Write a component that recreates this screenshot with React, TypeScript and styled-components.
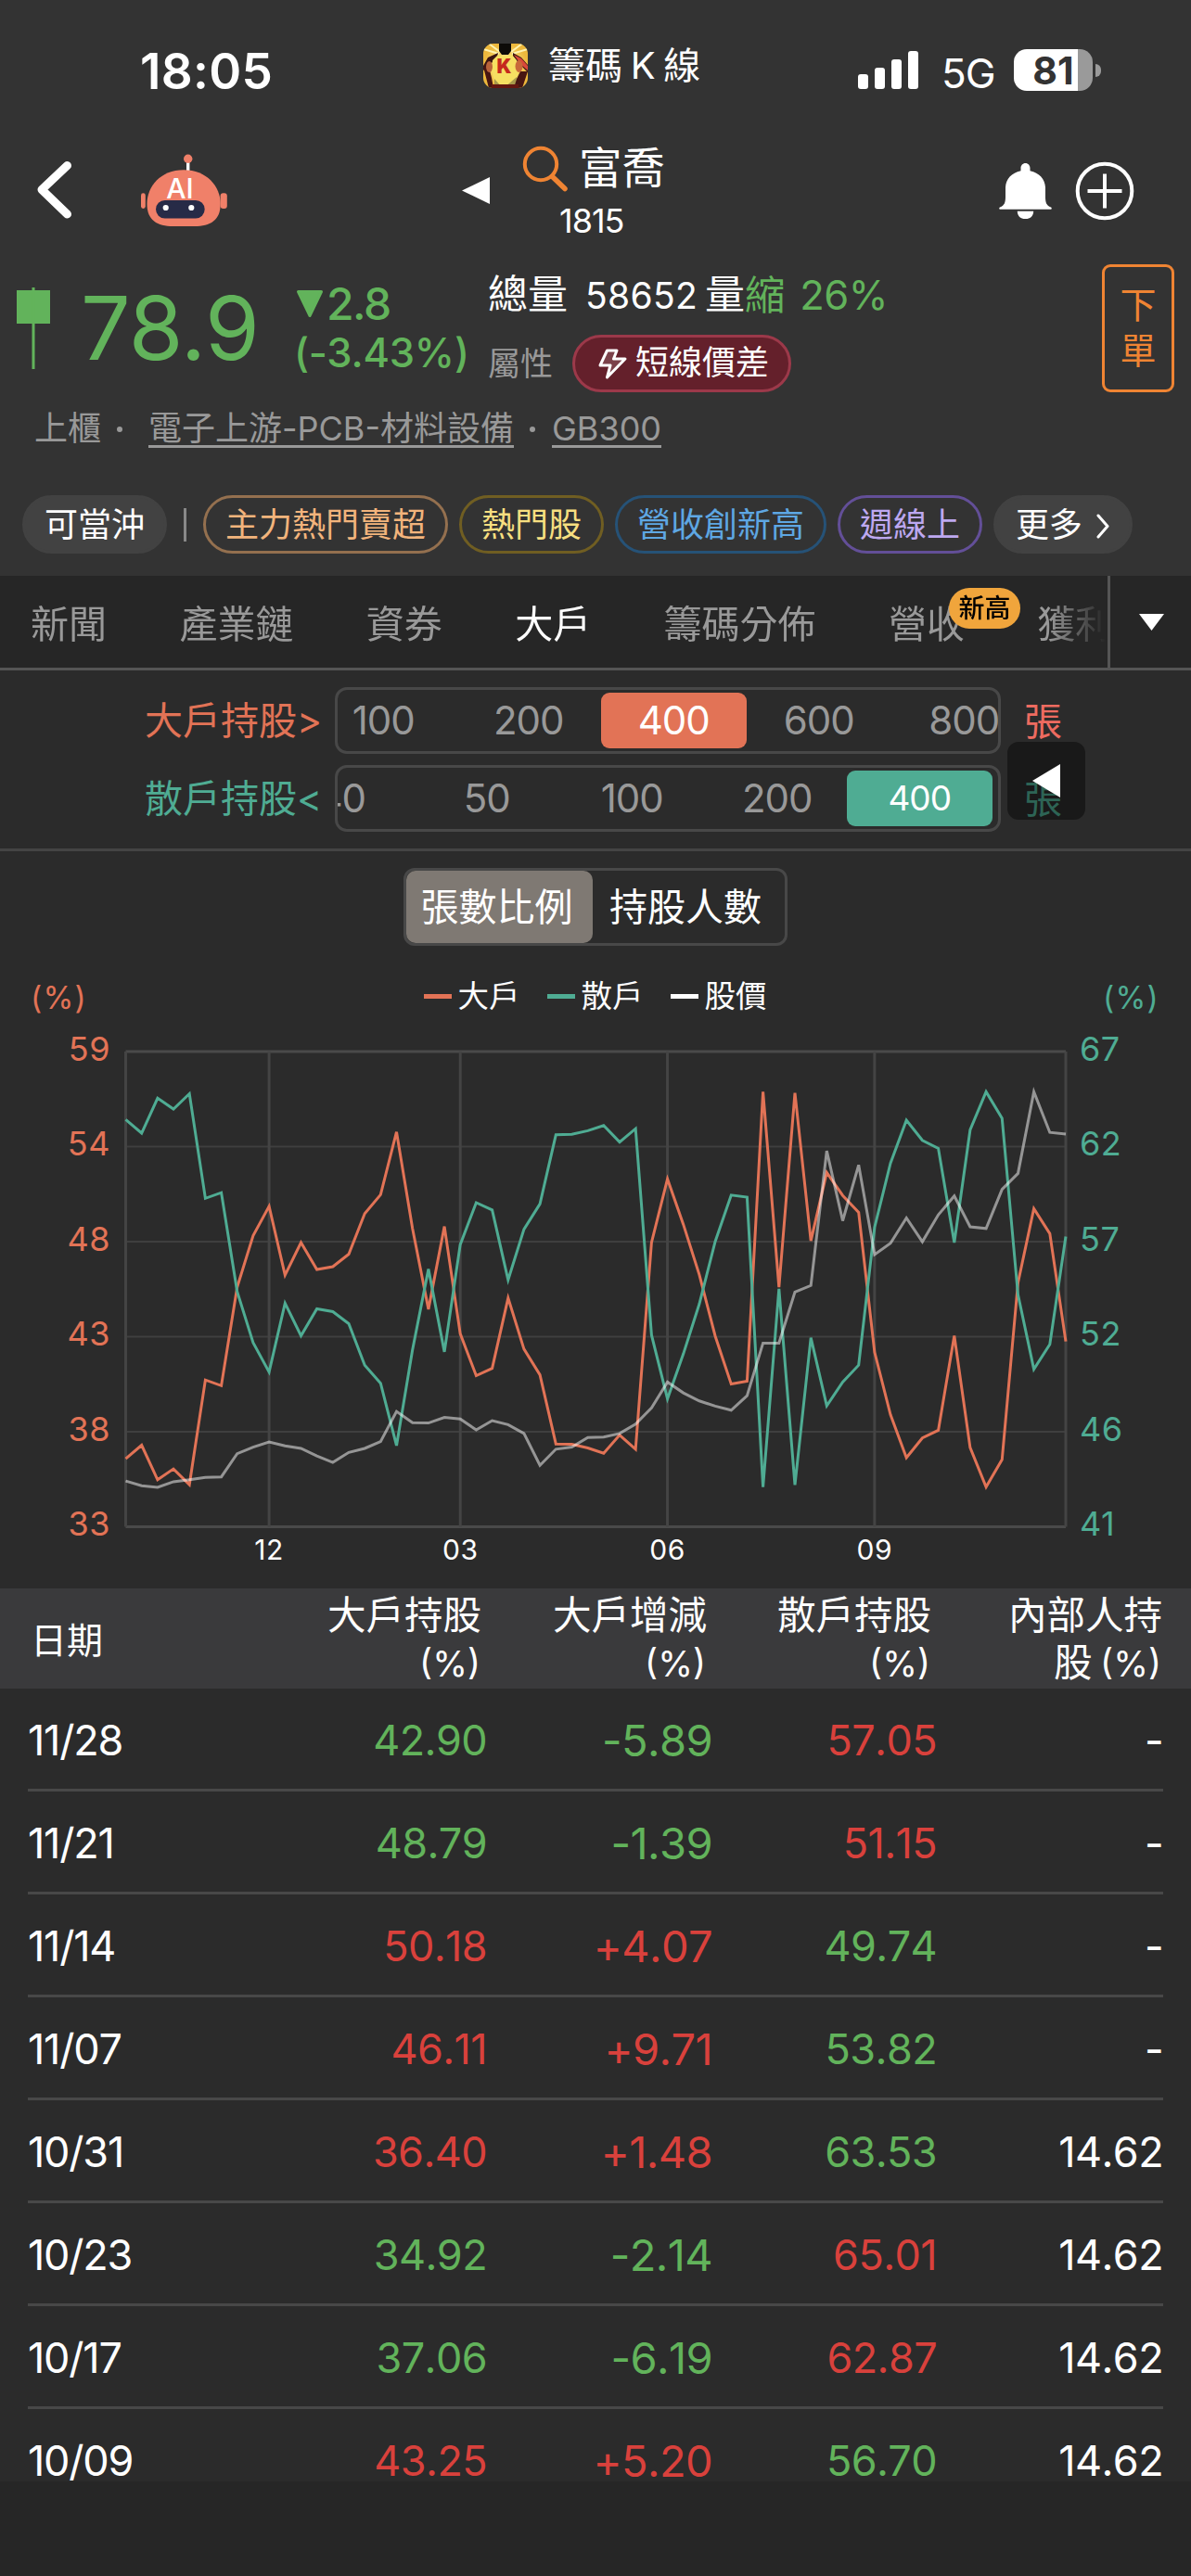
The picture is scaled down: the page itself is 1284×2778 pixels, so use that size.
import React from "react";
import styled, { createGlobalStyle } from "styled-components";

const c = {
  header: "#333333",
  body: "#2b2b2b",
  dark: "#262626",
  line: "#484848",
  grey: "#999999",
  green: "#62b35b",
  red: "#d9413c",
  coral: "#e27356",
  teal: "#4fac93",
  orange: "#ef8433",
};

const GlobalStyle = createGlobalStyle`
  *, *::before, *::after { box-sizing: border-box; }
  body {
    margin: 0;
    background: ${c.body};
    color: #fff;
    font-family: Inter, "Noto Sans CJK TC", sans-serif;
    font-size: 41px;
    line-height: 1.2;
  }
  svg { display: block; flex: none; }
`;

const Screen = styled.div`
  width: 1284px;
  height: 2778px;
  overflow: hidden;
  display: flex;
  flex-direction: column;
  white-space: nowrap;
`;

const Header = styled.header`
  height: 621px;
  flex: none;
  background: ${c.header};
`;

/* ---------- status bar ---------- */

const StatusBar = styled.div`
  height: 130px;
  display: flex;
  align-items: flex-start;
  line-height: 50px;
`;

const Clock = styled.div`
  width: 521px;
  padding-left: 151px;
  margin-top: 52px;
  font-size: 53px;
  font-weight: 600;
  letter-spacing: 0.3px;
`;

const AppTitle = styled.div`
  width: 404px;
  display: flex;
  align-items: center;
  margin-top: 46px;
  font-size: 40px;
`;

const AppName = styled.span`
  margin-left: 22px;
  word-spacing: -2.5px;
`;

const Network = styled.div`
  width: 78px;
  margin-top: 54px;
  font-size: 44px;
  letter-spacing: -1px;
`;

const Signal = styled.div`
  display: flex;
  align-items: flex-end;
  gap: 7px;
  height: 41px;
  width: 90px;
  margin-top: 55px;
`;

const SignalBar = styled.i<{ $h: number }>`
  width: 11px;
  height: ${(p) => p.$h}px;
  border-radius: 3px;
  background: #fff;
`;

const Battery = styled.div`
  width: 85px;
  height: 45px;
  margin-top: 53px;
  border-radius: 14px;
  background: linear-gradient(90deg, #fff 81%, #9a9a9a 81%);
  color: ${c.header};
  font-size: 41px;
  font-weight: 700;
  line-height: 46px;
  text-align: center;
`;

const BatteryTip = styled.i`
  width: 6px;
  height: 14px;
  margin: 69px 0 0 3px;
  border-radius: 0 7px 7px 0;
  background: #9a9a9a;
`;

/* ---------- navigation ---------- */

const NavBar = styled.nav`
  height: 149px;
  display: flex;
  align-items: center;
  padding-left: 38px;
`;

const NavLeft = styled.div`
  display: flex;
  align-items: center;
  gap: 73px;
  width: 460px;
`;

const StockSwitch = styled.div`
  display: flex;
  align-items: center;
  width: 579px;
  padding-top: 1px;
`;

const StockTitle = styled.div`
  margin-left: 35px;
  display: flex;
  flex-direction: column;
`;

const StockName = styled.div`
  display: flex;
  align-items: center;
  gap: 11px;
  height: 64px;
  margin-top: -2px;
  font-size: 46.5px;
`;

const StockCode = styled.div`
  height: 45px;
  padding-left: 40px;
  font-size: 36px;
  line-height: 48px;
  letter-spacing: -1px;
`;

const NavActions = styled.div`
  display: flex;
  align-items: center;
  gap: 25px;
  padding-top: 3px;
`;

/* ---------- quote ---------- */

const Quote = styled.section`
  height: 138px;
  margin-top: 6px;
  padding-left: 18px;
  display: flex;
  align-items: center;
`;

const Price = styled.div`
  width: 232px;
  margin-left: 33px;
  color: ${c.green};
  font-size: 95px;
  letter-spacing: -0.6px;
`;

const Change = styled.div`
  width: 207px;
  color: ${c.green};
  font-weight: 500;
  line-height: 53px;
`;

const ChangeAmount = styled.div`
  display: flex;
  align-items: center;
  gap: 3px;
  font-size: 48px;
  letter-spacing: -1.5px;
`;

const ChangeRate = styled.div`
  margin-left: -2px;
  font-size: 43.5px;
  letter-spacing: -0.2px;
`;

const Stats = styled.div`
  width: 662px;
  display: flex;
  flex-direction: column;
  padding-top: 2px;
`;

const StatRow = styled.div`
  height: 74px;
  display: flex;
  align-items: center;
`;

const StatLabel = styled.span`
  font-size: 43px;
`;

const Volume = styled.span`
  margin: 2px 8px 0 19px;
  font-size: 39px;
  letter-spacing: 0.3px;
`;

const Shrink = styled.span`
  display: flex;
  gap: 16px;
  color: ${c.green};
  font-size: 43.5px;
  letter-spacing: -0.4px;
`;

const TraitLabel = styled.span`
  color: ${c.grey};
  font-size: 35px;
`;

const Trait = styled.span`
  width: 236px;
  height: 62px;
  margin-left: 21px;
  padding-left: 25px;
  display: flex;
  align-items: center;
  gap: 9px;
  border: 3px solid #9c394a;
  border-radius: 31px;
  background: #64202b;
  font-size: 36px;
`;

const OrderButton = styled.button`
  width: 78px;
  height: 138px;
  padding: 0 0 2px;
  border: 3px solid ${c.orange};
  border-radius: 9px;
  background: none;
  color: ${c.orange};
  font: inherit;
  font-size: 39px;
  line-height: 49px;
`;

const Industry = styled.div`
  height: 79px;
  padding-left: 37px;
  display: flex;
  align-items: center;
  color: ${c.grey};
  font-size: 36px;
`;

const Dot = styled.i<{ $gap: number }>`
  width: 6px;
  height: 6px;
  margin: 0 ${(p) => p.$gap}px 0 17px;
  border-radius: 50%;
  background: ${c.grey};
`;

const IndustryLink = styled.a`
  height: 41px;
  border-bottom: 3px solid ${c.grey};
  line-height: 41px;
`;

const Chips = styled.div`
  margin-top: 32px;
  padding-left: 24px;
  display: flex;
  align-items: center;
  gap: 12px;
`;

const Chip = styled.span<{ $color?: string; $edge?: string }>`
  height: 63px;
  padding: 2px 21px 0;
  display: flex;
  align-items: center;
  gap: 15px;
  border: 3px solid ${(p) => p.$edge ?? "#424242"};
  border-radius: 32px;
  background: ${(p) => (p.$edge ? "none" : "#424242")};
  color: ${(p) => p.$color ?? "#fff"};
  font-size: 36px;
`;

const ChipDivider = styled.i`
  width: 3px;
  height: 36px;
  margin: 0 6px;
  background: #888;
`;

/* ---------- tabs ---------- */

const TabBar = styled.div`
  height: 102px;
  flex: none;
  display: flex;
  background: ${c.dark};
  border-bottom: 3px solid #555;
`;

const TabList = styled.div`
  width: 1194px;
  padding-left: 33px;
  display: flex;
  align-items: center;
  gap: 78.4px;
  overflow: hidden;
  mask-image: linear-gradient(90deg, #000 1130px, transparent 1192px);
`;

const Tab = styled.div<{ $active?: boolean }>`
  position: relative;
  padding-top: 6px;
  color: ${(p) => (p.$active ? "#fff" : c.grey)};
`;

const TabBadge = styled.span`
  position: absolute;
  left: 65px;
  top: -9px;
  width: 77px;
  height: 44px;
  border-radius: 22px;
  background: #f0a53c;
  color: #000;
  font-size: 28px;
  font-weight: 500;
  line-height: 44px;
  text-align: center;
`;

const TabMenu = styled.div`
  flex: 1;
  display: flex;
  align-items: center;
  justify-content: center;
  padding-left: 1px;
  border-left: 3px solid #555;
`;

/* ---------- holding filters ---------- */

const Filters = styled.section`
  position: relative;
  height: 195px;
  flex: none;
  padding: 18px 0 0 156px;
  display: flex;
  flex-direction: column;
  gap: 12px;
  border-bottom: 3px solid #444;
`;

const FilterRow = styled.div<{ $color: string }>`
  height: 72px;
  display: flex;
  align-items: center;
  color: ${(p) => p.$color};
`;

const FilterLabel = styled.span`
  width: 205px;
  padding-top: 2px;
`;

const Slider = styled.div`
  width: 718px;
  height: 72px;
  display: flex;
  align-items: center;
  overflow: hidden;
  border: 3px solid ${c.line};
  border-radius: 13px;
`;

const Track = styled.div<{ $shift: number }>`
  display: flex;
  margin-left: ${(p) => p.$shift}px;
`;

const Option = styled.span<{ $fill?: string; $size?: number; $snap?: number }>`
  width: 156.5px;
  height: 60px;
  flex: none;
  margin-left: ${(p) => p.$snap ?? 0}px;
  border-radius: 9px;
  background: ${(p) => p.$fill ?? "none"};
  color: ${(p) => (p.$fill ? "#fff" : c.grey)};
  font-size: ${(p) => p.$size ?? 42}px;
  line-height: 60px;
  text-align: center;
  letter-spacing: -1px;
`;

const Unit = styled.span<{ $color?: string }>`
  margin-left: 25px;
  padding-top: 3px;
  color: ${(p) => p.$color ?? "inherit"};
`;

const SideHandle = styled.div`
  position: absolute;
  left: 1086px;
  top: 77px;
  width: 84px;
  height: 84px;
  display: flex;
  align-items: center;
  justify-content: center;
  border-radius: 12px;
  background: rgba(0, 0, 0, 0.42);
`;

/* ---------- chart ---------- */

const Segmented = styled.div`
  width: 414px;
  height: 84px;
  flex: none;
  margin: 18px 0 0 435px;
  display: flex;
  border: 3px solid ${c.line};
  border-radius: 12px;
`;

const Segment = styled.div<{ $active?: boolean }>`
  width: ${(p) => (p.$active ? 201 : 207)}px;
  padding-right: ${(p) => (p.$active ? 6 : 7)}px;
  border-radius: 10px;
  background: ${(p) => (p.$active ? "#7f7973" : "none")};
  line-height: 79px;
  text-align: center;
`;

const LegendRow = styled.div`
  height: 108px;
  flex: none;
  padding: 0 34px 0 33px;
  display: flex;
  align-items: center;
  justify-content: space-between;
  font-size: 33.5px;
`;

const Percent = styled.span<{ $color: string }>`
  padding-top: 5px;
  color: ${(p) => p.$color};
  letter-spacing: 1.2px;
`;

const Legend = styled.div`
  display: flex;
  gap: 29px;
`;

const LegendItem = styled.span<{ $color: string }>`
  display: flex;
  align-items: center;
  gap: 7px;
  padding-top: 1px;
  &::before {
    content: "";
    width: 30px;
    height: 5px;
    background: ${(p) => p.$color};
  }
`;

const Plot = styled.svg`
  margin-top: -30px;
`;

const AxisText = styled.text<{ $size: number }>`
  font-size: ${(p) => p.$size}px;
  letter-spacing: 0.5px;
`;

/* ---------- table ---------- */

const columns = `
  display: grid;
  grid-template-columns: 1fr 244px 244px 244px 244px;
  align-items: center;
`;

const TableHead = styled.div`
  ${columns}
  height: 108px;
  flex: none;
  padding: 2px 30px 0;
  background: #3a3a3c;
  font-size: 41.5px;
  line-height: 51px;
  text-align: right;
`;

const HeadDate = styled.div`
  padding-left: 3px;
  font-size: 39px;
  text-align: left;
`;

const HeadCell = styled.div<{ $inset: number }>`
  padding-right: ${(p) => p.$inset}px;
  word-spacing: -3px;
`;

const HeadPercent = styled.span`
  padding-right: 1px;
  font-size: 38.5px;
`;

const TableBody = styled.div`
  height: 855px;
  flex: none;
  overflow: hidden;
`;

const TableRow = styled.div`
  ${columns}
  height: 111px;
  margin: 0 30px;
  padding-top: 4px;
  border-bottom: 3px solid ${c.line};
  font-size: 45px;
  font-kerning: none;
`;

const DateCell = styled.div`
  letter-spacing: -1.2px;
`;

const ValueCell = styled.div<{ $color?: string; $size?: number; $outset?: number }>`
  margin-right: ${(p) => -(p.$outset ?? 0)}px;
  color: ${(p) => p.$color ?? "#fff"};
  font-size: ${(p) => p.$size ?? 45}px;
  letter-spacing: -0.6px;
  text-align: right;
`;

const HomeArea = styled.div`
  flex: 1;
  background: ${c.dark};
`;

/* ---------- icons ---------- */

const AppIcon = () => (
  <svg width="48" height="48" viewBox="0 0 48 48">
    <defs>
      <clipPath id="app-icon">
        <rect width="48" height="48" rx="11" />
      </clipPath>
      <radialGradient id="app-glow">
        <stop offset="0" stopColor="#fff6a0" />
        <stop offset="1" stopColor="#edb83c" />
      </radialGradient>
    </defs>
    <g clipPath="url(#app-icon)">
      <rect width="48" height="48" fill="url(#app-glow)" />
      <path d="M0 6 17 11M6 0 18 9M48 6 31 11M42 0 30 9" stroke="#fff3b0" strokeWidth="2" />
      <path d="M17 0h13v8l-3 4h-7l-3-4z" fill="#0d0b08" />
      <path d="M16 10 5 15 0 24v5l7-6 8-8zM32 10l9 5 7 8v8l-8-8-8-9z" fill="#3a1512" />
      <path d="M33 12l8 4 7 8v5l-8-7z" fill="#d9483a" />
      <path d="M16 12 10 18 9 30 14 48h20l5-20-3-10-5-6-7 2z" fill="#f6df62" />
      <path d="M12 38 21 48h-9zM36 36 22 48h13z" fill="#a89a4c" />
      <path d="M0 25h6l3 12 2 11H6zM48 30h-8l-4 8-3 10h9z" fill="#471612" />
      <ellipse cx="6.500" cy="25" rx="3.500" ry="6" fill="#b8633a" />
      <ellipse cx="38.500" cy="24.500" rx="4" ry="6.500" fill="#c8683a" />
      <path d="M9 44h29v4H9z" fill="#641711" />
      <text x="22.500" y="31.500" fill="#c5281e" fontSize="21" fontWeight="900" textAnchor="middle">K</text>
    </g>
  </svg>
);

const Robot = () => (
  <svg width="94" height="80" viewBox="0 0 94 80">
    <rect x="49" y="9" width="3.400" height="11" fill="#fff" />
    <circle cx="50.700" cy="6.300" r="4.700" fill="#f08069" />
    <rect x="0" y="43.300" width="4.800" height="16.700" rx="2.400" fill="#f08069" />
    <rect x="85.600" y="43.300" width="7.200" height="16.700" rx="3" fill="#f08069" />
    <path d="M46 18.300c25 0 39.700 18 39.700 36.500 0 18-11 24.200-28 24.200H34.500c-17 0-28-6.200-28-24.200C6.500 36.300 21 18.300 46 18.300z" fill="#f08069" />
    <rect x="16" y="51" width="52.700" height="19.500" rx="9.700" fill="#272b47" />
    <circle cx="26.700" cy="59" r="3.100" fill="#fff" />
    <circle cx="54.300" cy="59" r="3.100" fill="#fff" />
    <text x="42" y="49.300" fill="#fff" fontSize="30" fontWeight="500" textAnchor="middle">AI</text>
  </svg>
);

const BackIcon = () => (
  <svg width="41" height="66" viewBox="0 0 41 66" fill="none" stroke="#fff" strokeWidth="9" strokeLinecap="round" strokeLinejoin="round">
    <path d="M34.500 6.500 7 32.500l27.500 26.500" />
  </svg>
);

const SearchIcon = () => (
  <svg width="50" height="50" viewBox="0 0 50 50" fill="none" stroke={c.orange} strokeLinecap="round">
    <circle cx="20" cy="20" r="17.200" strokeWidth="4" />
    <path d="M32.500 33.500 46 46.500" strokeWidth="5.500" />
  </svg>
);

const LeftArrow = ({ w, h }: { w: number; h: number }) => (
  <svg width={w} height={h} viewBox="0 0 10 10" preserveAspectRatio="none">
    <path d="M10 0v10L0 5z" fill="#fff" />
  </svg>
);

const BellIcon = () => (
  <svg width="57" height="60" viewBox="0 0 57 60" fill="#fff">
    <path d="M28.500 0c3 0 5 2.400 5 5.500v2.800C43.500 10.500 49.500 17 50 26v11c.2 5 .8 8.500 6 10.500 1.200.8 1 2.300-.6 2.300H1.600C0 49.800-.2 48.300 1 47.500c5.200-2 5.800-5.500 6-10.500V26C7.500 17 13.500 10.500 23.500 8.300V5.500c0-3.100 2-5.500 5-5.500z" />
    <path d="M19.800 51.800h17.400c0 5-3.500 8.400-8.700 8.400s-8.700-3.400-8.700-8.400z" />
  </svg>
);

const PlusCircle = () => (
  <svg width="64" height="64" viewBox="0 0 64 64" fill="none" stroke="#fff" strokeWidth="4">
    <circle cx="32" cy="32" r="29.300" />
    <path d="M32 13.500v37M13.500 32h37" />
  </svg>
);

const Candle = () => (
  <svg width="36" height="88" viewBox="0 0 36 88" fill={c.green}>
    <rect y="3" width="36" height="36" />
    <rect x="16.500" width="3" height="88" />
  </svg>
);

const DownTriangle = () => (
  <svg width="30" height="31" viewBox="0 0 30 31">
    <path d="M2.500 2.500h25L15 28.500z" fill={c.green} stroke={c.green} strokeWidth="3" strokeLinejoin="round" />
  </svg>
);

const Bolt = () => (
  <svg width="31" height="33" viewBox="0 0 31 33" fill="rgba(255,255,255,.15)" stroke="#fff" strokeWidth="3" strokeLinejoin="round">
    <path d="M9.500 2h10.500l-3.500 9h12.500L9.500 31l3.500-13H2z" />
  </svg>
);

const ChevronRight = () => (
  <svg width="15" height="30" viewBox="0 0 15 30" fill="none" stroke="#fff" strokeWidth="3" strokeLinecap="round" strokeLinejoin="round">
    <path d="M2 4l10 11.500L2 27" />
  </svg>
);

const MenuArrow = () => (
  <svg width="27" height="18" viewBox="0 0 27 18">
    <path d="M0 0h27L13.500 18z" fill="#fff" />
  </svg>
);

/* ---------- chart data: weekly samples, 0 = top edge of the plot, 1182 = bottom ---------- */

const RANGE = 1182;

const major = [
  1013, 979, 1065, 1038, 1077, 817, 831, 586, 458, 385, 556, 475, 542, 535, 504, 403, 356, 200, 440, 641,
  435, 702, 806, 788, 613, 740, 804, 976, 977, 986, 999, 954, 989, 475, 317, 430, 555, 708, 827, 820,
  100, 586, 103, 471, 301, 358, 400, 748, 903, 1010, 961, 942, 707, 985, 1083, 1015, 575, 391, 453, 721,
];
const retail = [
  169, 203, 116, 143, 105, 365, 351, 597, 724, 797, 626, 707, 640, 647, 677, 780, 825, 980, 742, 541,
  747, 480, 376, 394, 568, 442, 379, 207, 206, 197, 184, 225, 192, 705, 864, 752, 628, 472, 357, 362,
  1083, 590, 1078, 712, 881, 822, 780, 437, 278, 171, 221, 241, 475, 195, 100, 166, 605, 790, 728, 460,
];
const stockPrice = [
  1068, 1080, 1084, 1070, 1065, 1059, 1058, 1000, 984, 971, 981, 987, 1006, 1022, 997, 987, 970, 895, 923, 924,
  910, 914, 941, 918, 928, 950, 1029, 989, 984, 960, 959, 950, 927, 886, 822, 849, 869, 882, 892, 856,
  725, 725, 598, 582, 247, 421, 282, 505, 477, 414, 473, 406, 359, 436, 440, 343, 303, 100, 201, 205,
];

const LEFT = 135.5;
const RIGHT = 1149;
const TOP = 36;
const BOTTOM = 548.5;

const px = (i: number) => LEFT + ((RIGHT - LEFT) * i) / 59;
const py = (v: number) => TOP + ((BOTTOM - TOP) * v) / RANGE;
const points = (s: number[]) => s.map((v, i) => `${px(i).toFixed(1)},${py(v).toFixed(1)}`).join(" ");

const leftTicks = [59, 54, 48, 43, 38, 33];
const rightTicks = [67, 62, 57, 52, 46, 41];
const months: [number, string][] = [[9, "12"], [21, "03"], [34, "06"], [47, "09"]];

const Chart = () => (
  <Plot width="1284" height="615" viewBox="0 0 1284 615" fill="none">
    {leftTicks.map((t, i) => {
      const y = py((RANGE * i) / 5);
      const edge = i === 0 || i === 5;
      return (
        <g key={t}>
          <line x1={LEFT} x2={RIGHT} y1={y} y2={y} stroke={edge ? "#4a4a4a" : "#3f3f3f"} strokeWidth={edge ? 3 : 2} />
          <AxisText $size={36} x="119" y={y + 9.5} fill={c.coral} textAnchor="end">{t}</AxisText>
          <AxisText $size={36} x="1164" y={y + 9.5} fill={c.teal}>{rightTicks[i]}</AxisText>
        </g>
      );
    })}
    {[LEFT, RIGHT].map((x) => (
      <line key={x} x1={x} x2={x} y1={TOP} y2={BOTTOM} stroke="#444" strokeWidth="3" />
    ))}
    {months.map(([i, m]) => (
      <g key={m}>
        <line x1={px(i)} x2={px(i)} y1={TOP} y2={BOTTOM} stroke="#444" strokeWidth="3" />
        <AxisText $size={30} x={px(i)} y="584" fill="#fff" textAnchor="middle">{m}</AxisText>
      </g>
    ))}
    <polyline points={points(major)} stroke={c.coral} strokeWidth="3" />
    <polyline points={points(retail)} stroke={c.teal} strokeWidth="3" />
    <polyline points={points(stockPrice)} stroke="#fff" strokeOpacity="0.5" strokeWidth="3" />
  </Plot>
);

/* ---------- table data ---------- */

type Row = [date: string, major: string, diff: string, retail: string, insider: string];

const rows: Row[] = [
  ["11/28", "42.90", "-5.89", "57.05", "-"],
  ["11/21", "48.79", "-1.39", "51.15", "-"],
  ["11/14", "50.18", "+4.07", "49.74", "-"],
  ["11/07", "46.11", "+9.71", "53.82", "-"],
  ["10/31", "36.40", "+1.48", "63.53", "14.62"],
  ["10/23", "34.92", "-2.14", "65.01", "14.62"],
  ["10/17", "37.06", "-6.19", "62.87", "14.62"],
  ["10/09", "43.25", "+5.20", "56.70", "14.62"],
];

const headings: [string, number][] = [["大戶持股", 3], ["大戶增減", 4], ["散戶持股", 6]];

export default function App() {
  return (
    <Screen>
      <GlobalStyle />
      <Header>
        <StatusBar>
          <Clock>18:05</Clock>
          <AppTitle>
            <AppIcon />
            <AppName>籌碼 K 線</AppName>
          </AppTitle>
          <Signal>
            {[16, 23, 32, 41].map((h) => (
              <SignalBar key={h} $h={h} />
            ))}
          </Signal>
          <Network>5G</Network>
          <Battery>81</Battery>
          <BatteryTip />
        </StatusBar>

        <NavBar>
          <NavLeft>
            <BackIcon />
            <Robot />
          </NavLeft>
          <StockSwitch>
            <LeftArrow w={30} h={29} />
            <StockTitle>
              <StockName>
                <SearchIcon />
                富喬
              </StockName>
              <StockCode>1815</StockCode>
            </StockTitle>
          </StockSwitch>
          <NavActions>
            <BellIcon />
            <PlusCircle />
          </NavActions>
        </NavBar>

        <Quote>
          <Candle />
          <Price>78.9</Price>
          <Change>
            <ChangeAmount>
              <DownTriangle />
              2.8
            </ChangeAmount>
            <ChangeRate>(-3.43%)</ChangeRate>
          </Change>
          <Stats>
            <StatRow>
              <StatLabel>總量</StatLabel>
              <Volume>58652</Volume>
              <StatLabel>量</StatLabel>
              <Shrink>
                <span>縮</span>
                <span>26%</span>
              </Shrink>
            </StatRow>
            <StatRow>
              <TraitLabel>屬性</TraitLabel>
              <Trait>
                <Bolt />
                短線價差
              </Trait>
            </StatRow>
          </Stats>
          <OrderButton>
            下<br />單
          </OrderButton>
        </Quote>

        <Industry>
          上櫃
          <Dot $gap={28} />
          <IndustryLink>電子上游-PCB-材料設備</IndustryLink>
          <Dot $gap={18} />
          <IndustryLink>GB300</IndustryLink>
        </Industry>

        <Chips>
          <Chip>可當沖</Chip>
          <ChipDivider />
          <Chip $color="#f2b47c" $edge="#94704f">主力熱門賣超</Chip>
          <Chip $color="#f7df80" $edge="#705e22">熱門股</Chip>
          <Chip $color="#5ea7e3" $edge="#265277">營收創新高</Chip>
          <Chip $color="#bda8f0" $edge="#634f98">週線上</Chip>
          <Chip>
            更多
            <ChevronRight />
          </Chip>
        </Chips>
      </Header>

      <TabBar>
        <TabList>
          <Tab>新聞</Tab>
          <Tab>產業鏈</Tab>
          <Tab>資券</Tab>
          <Tab $active>大戶</Tab>
          <Tab>籌碼分佈</Tab>
          <Tab>
            營收
            <TabBadge>新高</TabBadge>
          </Tab>
          <Tab>獲利</Tab>
        </TabList>
        <TabMenu>
          <MenuArrow />
        </TabMenu>
      </TabBar>

      <Filters>
        <FilterRow $color={c.coral}>
          <FilterLabel>大戶持股&gt;</FilterLabel>
          <Slider>
            <Track $shift={-29}>
              <Option>100</Option>
              <Option>200</Option>
              <Option $fill={c.coral}>400</Option>
              <Option>600</Option>
              <Option>800</Option>
            </Track>
          </Slider>
          <Unit $color="#ee6b60">張</Unit>
        </FilterRow>
        <FilterRow $color={c.teal}>
          <FilterLabel>散戶持股&lt;</FilterLabel>
          <Slider>
            <Track $shift={-74}>
              <Option>40</Option>
              <Option>50</Option>
              <Option>100</Option>
              <Option>200</Option>
              <Option $fill={c.teal} $size={37} $snap={-3}>400</Option>
            </Track>
          </Slider>
          <Unit>張</Unit>
        </FilterRow>
        <SideHandle>
          <LeftArrow w={30} h={36} />
        </SideHandle>
      </Filters>

      <Segmented>
        <Segment $active>張數比例</Segment>
        <Segment>持股人數</Segment>
      </Segmented>

      <LegendRow>
        <Percent $color={c.coral}>(%)</Percent>
        <Legend>
          <LegendItem $color={c.coral}>大戶</LegendItem>
          <LegendItem $color={c.teal}>散戶</LegendItem>
          <LegendItem $color="#fff">股價</LegendItem>
        </Legend>
        <Percent $color={c.teal}>(%)</Percent>
      </LegendRow>
      <Chart />

      <TableHead>
        <HeadDate>日期</HeadDate>
        {headings.map(([label, inset]) => (
          <HeadCell key={label} $inset={inset}>
            {label}
            <br />
            <HeadPercent>(%)</HeadPercent>
          </HeadCell>
        ))}
        <HeadCell $inset={1}>
          內部人持
          <br />
          股 <HeadPercent>(%)</HeadPercent>
        </HeadCell>
      </TableHead>
      <TableBody>
        {rows.map(([date, big, diff, small, insider]) => {
          const up = diff.startsWith("+");
          return (
            <TableRow key={date}>
              <DateCell>{date}</DateCell>
              <ValueCell $color={up ? c.red : c.green} $outset={3}>{big}</ValueCell>
              <ValueCell $color={up ? c.red : c.green} $size={47} $outset={2}>{diff}</ValueCell>
              <ValueCell $color={up ? c.green : c.red}>{small}</ValueCell>
              <ValueCell>{insider}</ValueCell>
            </TableRow>
          );
        })}
      </TableBody>
      <HomeArea />
    </Screen>
  );
}
